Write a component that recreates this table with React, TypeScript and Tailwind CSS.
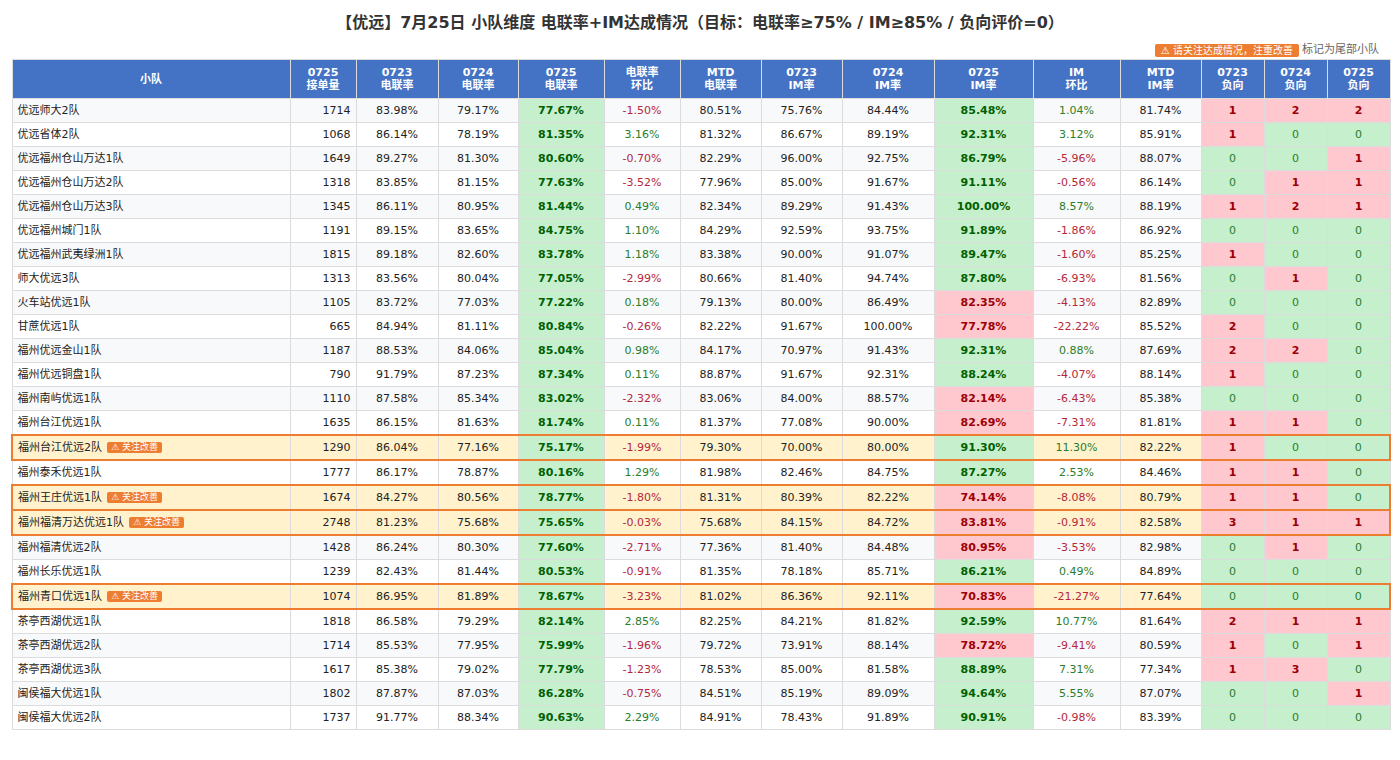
type Row = {
  name: string;
  flag?: boolean;
  orders: string;
  v: string[]; // 0723, 0724, 0725 电联率, 环比, MTD, 0723 IM, 0724 IM, 0725 IM, IM环比, MTD IM
  neg: number[];
};

const rows: Row[] = [
  { name: "优远师大2队", orders: "1714", v: ["83.98%", "79.17%", "77.67%", "-1.50%", "80.51%", "75.76%", "84.44%", "85.48%", "1.04%", "81.74%"], neg: [1, 2, 2] },
  { name: "优远省体2队", orders: "1068", v: ["86.14%", "78.19%", "81.35%", "3.16%", "81.32%", "86.67%", "89.19%", "92.31%", "3.12%", "85.91%"], neg: [1, 0, 0] },
  { name: "优远福州仓山万达1队", orders: "1649", v: ["89.27%", "81.30%", "80.60%", "-0.70%", "82.29%", "96.00%", "92.75%", "86.79%", "-5.96%", "88.07%"], neg: [0, 0, 1] },
  { name: "优远福州仓山万达2队", orders: "1318", v: ["83.85%", "81.15%", "77.63%", "-3.52%", "77.96%", "85.00%", "91.67%", "91.11%", "-0.56%", "86.14%"], neg: [0, 1, 1] },
  { name: "优远福州仓山万达3队", orders: "1345", v: ["86.11%", "80.95%", "81.44%", "0.49%", "82.34%", "89.29%", "91.43%", "100.00%", "8.57%", "88.19%"], neg: [1, 2, 1] },
  { name: "优远福州城门1队", orders: "1191", v: ["89.15%", "83.65%", "84.75%", "1.10%", "84.29%", "92.59%", "93.75%", "91.89%", "-1.86%", "86.92%"], neg: [0, 0, 0] },
  { name: "优远福州武夷绿洲1队", orders: "1815", v: ["89.18%", "82.60%", "83.78%", "1.18%", "83.38%", "90.00%", "91.07%", "89.47%", "-1.60%", "85.25%"], neg: [1, 0, 0] },
  { name: "师大优远3队", orders: "1313", v: ["83.56%", "80.04%", "77.05%", "-2.99%", "80.66%", "81.40%", "94.74%", "87.80%", "-6.93%", "81.56%"], neg: [0, 1, 0] },
  { name: "火车站优远1队", orders: "1105", v: ["83.72%", "77.03%", "77.22%", "0.18%", "79.13%", "80.00%", "86.49%", "82.35%", "-4.13%", "82.89%"], neg: [0, 0, 0] },
  { name: "甘蔗优远1队", orders: "665", v: ["84.94%", "81.11%", "80.84%", "-0.26%", "82.22%", "91.67%", "100.00%", "77.78%", "-22.22%", "85.52%"], neg: [2, 0, 0] },
  { name: "福州优远金山1队", orders: "1187", v: ["88.53%", "84.06%", "85.04%", "0.98%", "84.17%", "70.97%", "91.43%", "92.31%", "0.88%", "87.69%"], neg: [2, 2, 0] },
  { name: "福州优远铜盘1队", orders: "790", v: ["91.79%", "87.23%", "87.34%", "0.11%", "88.87%", "91.67%", "92.31%", "88.24%", "-4.07%", "88.14%"], neg: [1, 0, 0] },
  { name: "福州南屿优远1队", orders: "1110", v: ["87.58%", "85.34%", "83.02%", "-2.32%", "83.06%", "84.00%", "88.57%", "82.14%", "-6.43%", "85.38%"], neg: [0, 0, 0] },
  { name: "福州台江优远1队", orders: "1635", v: ["86.15%", "81.63%", "81.74%", "0.11%", "81.37%", "77.08%", "90.00%", "82.69%", "-7.31%", "81.81%"], neg: [1, 1, 0] },
  { name: "福州台江优远2队", flag: true, orders: "1290", v: ["86.04%", "77.16%", "75.17%", "-1.99%", "79.30%", "70.00%", "80.00%", "91.30%", "11.30%", "82.22%"], neg: [1, 0, 0] },
  { name: "福州泰禾优远1队", orders: "1777", v: ["86.17%", "78.87%", "80.16%", "1.29%", "81.98%", "82.46%", "84.75%", "87.27%", "2.53%", "84.46%"], neg: [1, 1, 0] },
  { name: "福州王庄优远1队", flag: true, orders: "1674", v: ["84.27%", "80.56%", "78.77%", "-1.80%", "81.31%", "80.39%", "82.22%", "74.14%", "-8.08%", "80.79%"], neg: [1, 1, 0] },
  { name: "福州福清万达优远1队", flag: true, orders: "2748", v: ["81.23%", "75.68%", "75.65%", "-0.03%", "75.68%", "84.15%", "84.72%", "83.81%", "-0.91%", "82.58%"], neg: [3, 1, 1] },
  { name: "福州福清优远2队", orders: "1428", v: ["86.24%", "80.30%", "77.60%", "-2.71%", "77.36%", "81.40%", "84.48%", "80.95%", "-3.53%", "82.98%"], neg: [0, 1, 0] },
  { name: "福州长乐优远1队", orders: "1239", v: ["82.43%", "81.44%", "80.53%", "-0.91%", "81.35%", "78.18%", "85.71%", "86.21%", "0.49%", "84.89%"], neg: [0, 0, 0] },
  { name: "福州青口优远1队", flag: true, orders: "1074", v: ["86.95%", "81.89%", "78.67%", "-3.23%", "81.02%", "86.36%", "92.11%", "70.83%", "-21.27%", "77.64%"], neg: [0, 0, 0] },
  { name: "茶亭西湖优远1队", orders: "1818", v: ["86.58%", "79.29%", "82.14%", "2.85%", "82.25%", "84.21%", "81.82%", "92.59%", "10.77%", "81.64%"], neg: [2, 1, 1] },
  { name: "茶亭西湖优远2队", orders: "1714", v: ["85.53%", "77.95%", "75.99%", "-1.96%", "79.72%", "73.91%", "88.14%", "78.72%", "-9.41%", "80.59%"], neg: [1, 0, 1] },
  { name: "茶亭西湖优远3队", orders: "1617", v: ["85.38%", "79.02%", "77.79%", "-1.23%", "78.53%", "85.00%", "81.58%", "88.89%", "7.31%", "77.34%"], neg: [1, 3, 0] },
  { name: "闽侯福大优远1队", orders: "1802", v: ["87.87%", "87.03%", "86.28%", "-0.75%", "84.51%", "85.19%", "89.09%", "94.64%", "5.55%", "87.07%"], neg: [0, 0, 1] },
  { name: "闽侯福大优远2队", orders: "1737", v: ["91.77%", "88.34%", "90.63%", "2.29%", "84.91%", "78.43%", "91.89%", "90.91%", "-0.98%", "83.39%"], neg: [0, 0, 0] },
];

const headers: [string, string][] = [
  ["0725", "接单量"],
  ["0723", "电联率"],
  ["0724", "电联率"],
  ["0725", "电联率"],
  ["电联率", "环比"],
  ["MTD", "电联率"],
  ["0723", "IM率"],
  ["0724", "IM率"],
  ["0725", "IM率"],
  ["IM", "环比"],
  ["MTD", "IM率"],
  ["0723", "负向"],
  ["0724", "负向"],
  ["0725", "负向"],
];

const cell = "border border-[#dcdcdc] px-[5px] py-[5px] leading-[13px] text-center";
const good = "bg-[#c6efce] text-[#006100] font-bold";
const bad = "bg-[#ffc7ce] text-[#9c0006] font-bold";

function pct(s: string) {
  return parseFloat(s.replace("%", ""));
}

function Badge() {
  return (
    <span className="ml-[5px] inline-block rounded-[2px] bg-[#ed7d31] px-[4px] align-[1px] text-[9px] leading-[11px] text-white">
      ⚠ 关注改善
    </span>
  );
}

function DataRow({ r, i }: { r: Row; i: number }) {
  const base = r.flag ? "bg-[#fff2cc]" : "";
  const rowBg = r.flag ? "" : i % 2 === 0 ? "bg-[#f8f9fb]" : "bg-white";
  const trend = (s: string) => (pct(s) < 0 ? "text-[#b5273a]" : "text-[#2a7d2a]");
  return (
    <tr className={r.flag ? `border-2 border-[#ed7d31] ${rowBg}` : rowBg}>
      <td className={`${cell} text-left ${base}`}>
        {r.name}
        {r.flag && <Badge />}
      </td>
      <td className={`${cell} text-right ${base}`}>{r.orders}</td>
      <td className={`${cell} ${base}`}>{r.v[0]}</td>
      <td className={`${cell} ${base}`}>{r.v[1]}</td>
      <td className={`${cell} ${pct(r.v[2]) >= 75 ? good : bad}`}>{r.v[2]}</td>
      <td className={`${cell} ${base} ${trend(r.v[3])}`}>{r.v[3]}</td>
      <td className={`${cell} ${base}`}>{r.v[4]}</td>
      <td className={`${cell} ${base}`}>{r.v[5]}</td>
      <td className={`${cell} ${base}`}>{r.v[6]}</td>
      <td className={`${cell} ${pct(r.v[7]) >= 85 ? good : bad}`}>{r.v[7]}</td>
      <td className={`${cell} ${base} ${trend(r.v[8])}`}>{r.v[8]}</td>
      <td className={`${cell} ${base}`}>{r.v[9]}</td>
      {r.neg.map((n, k) => (
        <td
          key={k}
          className={`${cell} ${n > 0 ? bad : "bg-[#c6efce] text-[#2a7d2a]"}`}
        >
          {n}
        </td>
      ))}
    </tr>
  );
}

export default function App() {
  return (
    <div className="min-h-[760px] bg-white px-[11px] pt-[11px] font-['DejaVu_Sans','Noto_Sans_CJK_SC',sans-serif] text-[11px] text-[#222]">
      <h1 className="h-[24px] text-center text-[16px] font-bold leading-[24px] text-[#333]">
        【优远】7月25日 小队维度 电联率+IM达成情况（目标：电联率≥75% / IM≥85% / 负向评价=0）
      </h1>
      <div className="mt-[8px] mb-[2px] flex h-[14px] items-center justify-end pr-[10px]">
        <span className="rounded-[2px] bg-[#ed7d31] px-[6px] text-[10px] leading-[13px] text-white">
          ⚠ 请关注达成情况，注重改善
        </span>
        <span className="ml-[3px] text-[11px] text-[#666]">标记为尾部小队</span>
      </div>
      <table className="w-[1378px] table-fixed border-collapse">
        <colgroup>
          <col className="w-[278px]" />
          <col className="w-[66px]" />
          <col className="w-[82px]" />
          <col className="w-[80px]" />
          <col className="w-[86px]" />
          <col className="w-[76px]" />
          <col className="w-[81px]" />
          <col className="w-[81px]" />
          <col className="w-[92px]" />
          <col className="w-[99px]" />
          <col className="w-[87px]" />
          <col className="w-[81px]" />
          <col className="w-[63px]" />
          <col className="w-[63px]" />
          <col className="w-[63px]" />
        </colgroup>
        <thead>
          <tr className="bg-[#4472c4] text-white">
            <th className="border border-[#dcdcdc] px-[5px] py-[6px] text-center font-bold leading-[13px]">
              小队
            </th>
            {headers.map(([a, b], k) => (
              <th
                key={k}
                className="border border-[#dcdcdc] px-[3px] py-[6px] text-center font-bold leading-[13px]"
              >
                {a}
                <br />
                {b}
              </th>
            ))}
          </tr>
        </thead>
        <tbody>
          {rows.map((r, i) => (
            <DataRow key={r.name} r={r} i={i} />
          ))}
        </tbody>
      </table>
    </div>
  );
}
